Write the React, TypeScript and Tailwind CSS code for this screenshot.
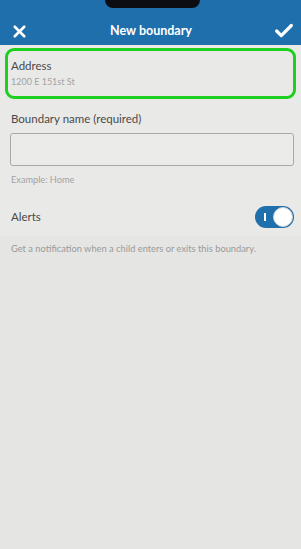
import { X, Check } from 'lucide-react';

export default function App() {
    return (
        <div className="w-[301px] h-[549px] bg-[#e9e9e7] flex flex-col overflow-hidden" style={{ fontFamily: 'Lato, "Open Sans", sans-serif' }}>
            {/* Header */}
            <div className="relative bg-[#1f6fad] h-[45px] shrink-0 flex items-center pt-[17px] pl-[10px] pr-[6px]">
                {/* Notch */}
                <div className="absolute left-[105px] top-0 w-[95px] h-[8px] bg-[#0b0d12] rounded-b-[8px]" />
                <X size={19} strokeWidth={3.3} className="text-white" />
                <div className="flex-1 text-center text-white text-[12.5px] font-bold">New boundary</div>
                <Check size={22} strokeWidth={3.5} className="text-white" />
            </div>

            {/* Address */}
            <div className="mx-[5px] mt-[3px] h-[51px] border-[3.5px] border-[#1fcf1f] rounded-[9px] px-[3px] pt-[9px] flex flex-col">
                <span className="text-[11.5px] text-[#4a4a4a] leading-none">Address</span>
                <span className="text-[9px] text-[#a3a3a3] leading-none mt-[5px]">1200 E 151st St</span>
            </div>

            {/* Boundary name */}
            <div className="pl-[10px] pr-[7px] mt-[14px] flex flex-col">
                <span className="text-[11.5px] text-[#4a4a4a] leading-none pl-[1px]">Boundary name (required)</span>
                <div className="mt-[8px] h-[33px] border border-[#a9a9a9] rounded-[3px] bg-[#ebebe9]" />
                <span className="text-[9.2px] text-[#a3a3a3] leading-none mt-[9px] pl-[1px]">Example: Home</span>
            </div>

            {/* Alerts */}
            <div className="pl-[11px] pr-[7px] mt-[22px] flex items-center justify-between">
                <span className="text-[11.5px] text-[#4a4a4a]">Alerts</span>
                <div className="relative w-[39px] h-[22px] rounded-full bg-[#1f6fad]">
                    <div className="absolute left-[9px] top-[7px] w-[1.5px] h-[8px] bg-white" />
                    <div className="absolute right-[1px] top-[1px] w-[20px] h-[20px] rounded-full bg-white border border-[#d0d0d0]" />
                </div>
            </div>

            <div className="flex-1 mt-[8px] bg-[#e5e5e3] px-[11px] pt-[8px]">
                <span className="block text-[9.3px] leading-none text-[#9a9a9a]">Get a notification when a child enters or exits this boundary.</span>
            </div>
        </div>
    );
}
